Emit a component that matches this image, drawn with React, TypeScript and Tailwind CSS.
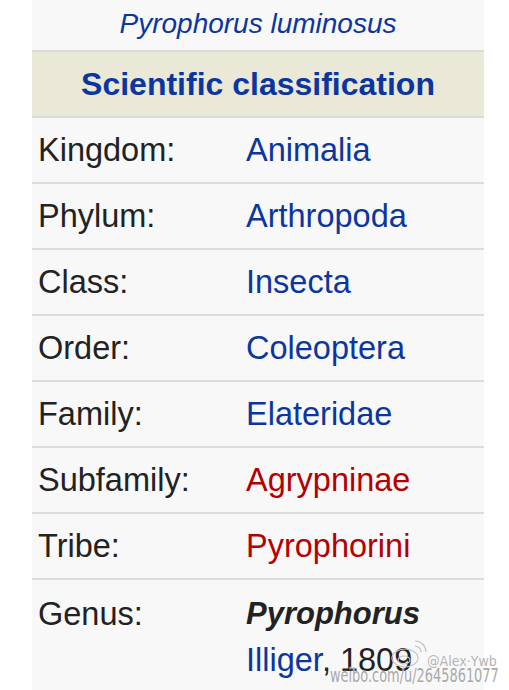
import React from "react";

const BLUE = "text-[#0b36a0]";
const RED = "text-[#b40000]";

type Row = { label: string; value: string; red?: boolean };

const rows: Row[] = [
  { label: "Kingdom:", value: "Animalia" },
  { label: "Phylum:", value: "Arthropoda" },
  { label: "Class:", value: "Insecta" },
  { label: "Order:", value: "Coleoptera" },
  { label: "Family:", value: "Elateridae" },
  { label: "Subfamily:", value: "Agrypninae", red: true },
  { label: "Tribe:", value: "Pyrophorini", red: true },
];

export default function App() {
  return (
    <div
      className="relative w-[509px] h-[690px] overflow-hidden bg-white"
      style={{ fontFamily: '"Liberation Sans", Arial, sans-serif' }}
    >
      <div className="ml-[32px] w-[452px] bg-[#f8f8f9] min-h-[690px]">
        <div className="h-[50px] flex items-center justify-center">
          <span className={`italic text-[28px] leading-none ${BLUE} -mt-[2px]`}>
            Pyrophorus luminosus
          </span>
        </div>
        <div className="h-[68px] bg-[#eae8d7] border-y-2 border-[#dcdcd6] flex items-center justify-center">
          <span className={`font-bold text-[32px] leading-none ${BLUE} -mt-[1px]`}>
            Scientific classification
          </span>
        </div>
        {rows.map((r) => (
          <div
            key={r.label}
            className="h-[66px] border-b-2 border-[#dcdcdc] flex items-center text-[32.5px] leading-none"
          >
            <span className="w-[214px] pl-[6px] text-[#222]">{r.label}</span>
            <span className={r.red ? RED : BLUE}>{r.value}</span>
          </div>
        ))}
        <div className="flex text-[32.5px] leading-none pt-[18px]">
          <span className="w-[214px] pl-[6px] text-[#222]">Genus:</span>
          <div className="flex flex-col gap-[15px]">
            <span className="font-bold italic text-[#222] text-[31px]">Pyrophorus</span>
            <span>
              <span className={BLUE}>Illiger</span>
              <span className="text-[#222]">, 1809</span>
            </span>
          </div>
        </div>
      </div>

      {/* watermark overlay */}
      <div className="absolute left-[390px] top-[638px]">
        <svg width="38" height="32" viewBox="0 0 38 32" fill="none" stroke="#c4c4c4" strokeWidth="1.2">
          <ellipse cx="15" cy="20" rx="13" ry="9" />
          <ellipse cx="14" cy="22" rx="6" ry="4" />
          <path d="M25 8 a6 6 0 0 1 6 6" />
          <path d="M25 3 a11 11 0 0 1 11 11" />
        </svg>
      </div>
      <div
        className="absolute left-[427px] top-[654px] text-[14px] leading-none text-[#b4b4b4] whitespace-nowrap"
        style={{
          fontFamily: '"DejaVu Sans", sans-serif',
          textShadow: "0 0 2px #fff",
          transform: "scaleX(0.9)",
          transformOrigin: "left top",
        }}
      >
        @Alex·Ywb
      </div>
      <div
        className="absolute left-[330px] top-[666px] text-[19px] leading-none text-[#a8a8a8] whitespace-nowrap"
        style={{
          fontFamily: '"DejaVu Sans", sans-serif',
          textShadow: "0 0 2px #fff",
          transform: "scaleX(0.68)",
          transformOrigin: "left top",
        }}
      >
        weibo.com/u/2645861077
      </div>
    </div>
  );
}
